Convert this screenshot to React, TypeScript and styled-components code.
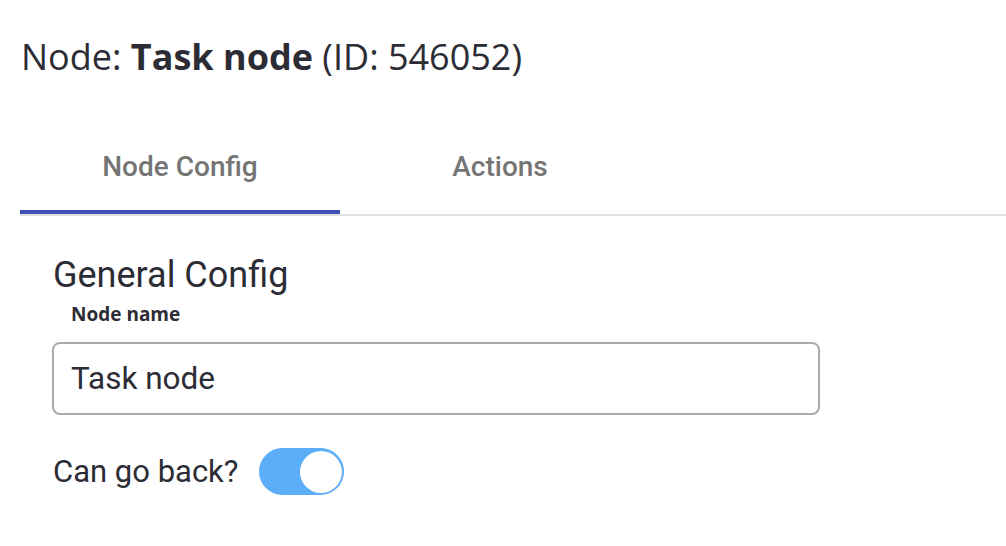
import React, { useState } from "react";
import styled, { createGlobalStyle } from "styled-components";

const Global = createGlobalStyle`
  html, body { margin: 0; padding: 0; background: #ffffff; }
  body { font-family: Roboto, "Liberation Sans", sans-serif; color: #2c2c35; }
  * { box-sizing: border-box; }
`;

const Page = styled.div`
  width: 1006px;
  height: 546px;
  padding: 33px 0 0 20px;
  display: flex;
  flex-direction: column;
  overflow: hidden;
`;

const Title = styled.h1`
  margin: 0;
  font-family: "Open Sans", "Noto Sans", sans-serif;
  font-weight: 400;
  font-size: 36px;
  line-height: 48px;
  color: #2c2c35;
  padding-left: 1px;
  white-space: nowrap;
  & b { font-weight: 700; }
`;

const TabBar = styled.div`
  margin-top: 37px;
  display: flex;
  border-bottom: 2px solid #e0e0e0;
`;

const Tab = styled.button<{ $active?: boolean }>`
  width: 320px;
  height: 96px;
  border: none;
  background: transparent;
  padding: 0;
  font-family: Roboto, sans-serif;
  font-weight: 500;
  font-size: 28px;
  color: #757575;
  position: relative;
  cursor: pointer;
  &::after {
    content: "";
    position: absolute;
    left: 0;
    right: 0;
    bottom: 0;
    height: 4px;
    background: ${(p) => (p.$active ? "#3f51b5" : "transparent")};
  }
`;

const Content = styled.div`
  padding: 39px 0 0 32px;
  display: flex;
  flex-direction: column;
  align-items: flex-start;
`;

const SectionTitle = styled.h2`
  margin: 0;
  font-family: Roboto, sans-serif;
  font-weight: 400;
  font-size: 36px;
  line-height: 40px;
  color: #2c2c35;
  padding-left: 1px;
`;

const FieldLabel = styled.label`
  display: block;
  margin: 6px 0 0 19px;
  font-family: "Open Sans", "Noto Sans", sans-serif;
  font-weight: 700;
  font-size: 19px;
  line-height: 26px;
  color: #2c2c35;
`;

const TextInput = styled.input`
  margin-top: 15px;
  width: 768px;
  height: 73px;
  border: 2px solid #aaaaaa;
  border-radius: 8px;
  padding: 0 0 0 17px;
  font-family: Roboto, sans-serif;
  font-size: 31.5px;
  color: #2c2c35;
  outline: none;
`;

const ToggleRow = styled.div`
  margin-top: 33px;
  display: flex;
  align-items: center;
  gap: 20px;
`;

const ToggleLabel = styled.span`
  font-family: Roboto, sans-serif;
  font-size: 31px;
  color: #2c2c35;
  padding-left: 1px;
`;

const Track = styled.button<{ $on: boolean }>`
  width: 85px;
  height: 47px;
  border-radius: 24px;
  border: none;
  padding: 2px;
  background: ${(p) => (p.$on ? "#5baef7" : "#c4c4c4")};
  display: flex;
  justify-content: ${(p) => (p.$on ? "flex-end" : "flex-start")};
  align-items: center;
  cursor: pointer;
`;

const Thumb = styled.span`
  width: 42px;
  height: 42px;
  border-radius: 50%;
  background: #ffffff;
`;

export default function App() {
  const [on, setOn] = useState(true);
  const [name, setName] = useState("Task node");
  return (
    <>
      <Global />
      <Page>
        <Title>
          Node: <b>Task node</b> (ID: 546052)
        </Title>
        <TabBar>
          <Tab $active>Node Config</Tab>
          <Tab>Actions</Tab>
        </TabBar>
        <Content>
          <SectionTitle>General Config</SectionTitle>
          <FieldLabel htmlFor="node-name">Node name</FieldLabel>
          <TextInput id="node-name" value={name} onChange={(e) => setName(e.target.value)} />
          <ToggleRow>
            <ToggleLabel>Can go back?</ToggleLabel>
            <Track $on={on} onClick={() => setOn(!on)} aria-label="Can go back?">
              <Thumb />
            </Track>
          </ToggleRow>
        </Content>
      </Page>
    </>
  );
}
